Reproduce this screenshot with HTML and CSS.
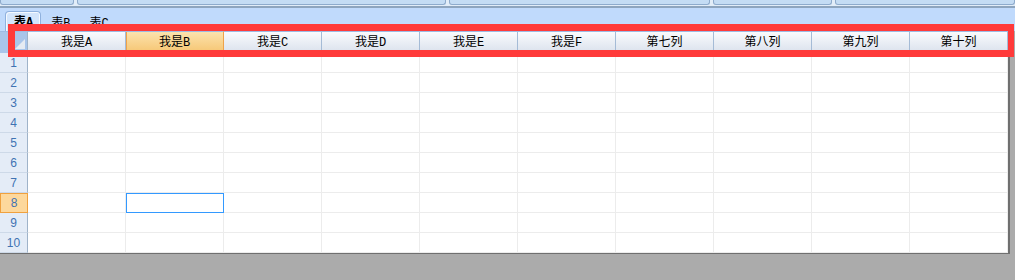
FILE: index.html
```html
<!DOCTYPE html>
<html lang="en">
<head>
  <meta charset="UTF-8">
  <title>Sheet</title>
  <link rel="stylesheet" href="styles.css">
</head>
<body>

<div class="toolbar">
  <div class="tool w1"><span>DOWNLOAD</span></div>
  <div class="tool w2"><span>SEARCH</span></div>
  <div class="tool w3"><span>新增一级目录</span></div>
  <div class="tool w4"><span>删除列</span></div>
  <div class="tool w5"><span>新建工作表</span></div>
</div>

<div class="tabs">
  <div class="tab active">表A</div>
  <div class="tab">表B</div>
  <div class="tab">表C</div>
</div>

<div class="sheet" id="sheet"></div>

<div class="mark"></div>

<script>
  const columns = ["我是A", "我是B", "我是C", "我是D", "我是E", "我是F", "第七列", "第八列", "第九列", "第十列"];
  const rowCount = 10;
  const activeCol = 1;
  const activeRow = 8;

  const sheet = document.getElementById("sheet");

  function cell(cls, text) {
    const div = document.createElement("div");
    div.className = cls;
    if (text) div.textContent = text;
    sheet.appendChild(div);
    return div;
  }

  const corner = cell("corner");
  corner.appendChild(document.createElement("span"));

  columns.forEach((name, i) => {
    cell(i === activeCol ? "head current" : "head", name);
  });

  for (let r = 1; r <= rowCount; r++) {
    cell(r === activeRow ? "num current" : "num", String(r));
    columns.forEach((name, i) => {
      const selected = r === activeRow && i === activeCol;
      cell(selected ? "cell selected" : "cell");
    });
  }
</script>

</body>
</html>
```

FILE: styles.css
```css
body {
  margin: 0;
  background-color: #ababab;
  font-family: "Liberation Mono", "Noto Sans CJK SC", monospace;
  font-size: 12px;
  color: #000;
  position: relative;
}
.toolbar {
  display: flex;
  gap: 3px;
  height: 6px;
  background-color: #e2edf8;
  border-bottom: 2px solid #8ea5be;
}
.tool {
  box-sizing: border-box;
  height: 5px;
  border: 1px solid #8eabcc;
  border-top: none;
  border-radius: 0 0 3px 3px;
  background-color: #c4dcf4;
  overflow: hidden;
  text-align: center;
}
.tool span {
  display: block;
  margin-top: -10px;
  line-height: 12px;
  color: #3b6db5;
}
.w1 { width: 74px; }
.w2 { width: 369px; }
.w3 { width: 262px; }
.w4 { width: 119px; }
.w5 { width: 180px; }

.tabs {
  display: flex;
  align-items: flex-end;
  height: 23px;
  padding-left: 5px;
  background-color: #c0dafc;
}
.tab {
  box-sizing: border-box;
  height: 17px;
  padding: 3px 9px 0 10px;
  line-height: 14px;
}
.tab.active {
  height: 20px;
  padding: 4px 7px 0 8px;
  font-weight: bold;
  background-color: #d3e5fb;
  border: 1px solid #8fb1de;
  border-bottom: none;
  border-radius: 4px 4px 0 0;
  box-shadow: inset 1px 1px 0 #f4f9ff, inset -1px 0 0 #f4f9ff;
}

.sheet {
  display: grid;
  grid-template-columns: 28px repeat(10, 98px);
  grid-template-rows: 22px;
  grid-auto-rows: 20px;
  width: 1008px;
  background-color: #fff;
  border-right: 2px solid #6f6f6f;
  border-bottom: 1px solid #6f6f6f;
}
.corner, .head {
  box-sizing: border-box;
  border-top: 1px solid #9dbbe4;
}
.corner {
  display: flex;
  justify-content: flex-end;
  align-items: flex-end;
  padding: 0 2px 4px 0;
  background-color: #a9c5ea;
  border-right: 1px solid #9fb3c9;
}
.corner span {
  width: 0;
  height: 0;
  border-left: 10px solid transparent;
  border-bottom: 10px solid #e6ebf2;
}
.head {
  display: flex;
  align-items: center;
  justify-content: center;
  padding-bottom: 2px;
  background: linear-gradient(#fafbfd, #dbe2ed);
  border-right: 1px solid #a5bbd6;
  border-bottom: 1px solid #a5bbd6;
}
.head.current {
  background: linear-gradient(#fce3ad, #f6c674);
  border-right-color: #eea24a;
  box-shadow: inset 1px 0 0 #eea24a;
}
.num {
  box-sizing: border-box;
  display: flex;
  align-items: center;
  justify-content: center;
  font-family: "Liberation Sans", sans-serif;
  color: #3f73b3;
  background-color: #e4ecf7;
  border-right: 1px solid #9fb3c9;
  border-bottom: 1px solid #cdd9e8;
}
.num.current {
  background-color: #fdd89c;
  border: 1px solid #f0a13e;
}
.cell {
  box-sizing: border-box;
  border-right: 1px solid #ececec;
  border-bottom: 1px solid #ececec;
}
.cell.selected {
  outline: 1px solid #3399ff;
  outline-offset: -1px;
}

.mark {
  position: absolute;
  left: 8px;
  top: 24px;
  box-sizing: border-box;
  width: 1006px;
  height: 33px;
  border: 7px solid #ff3a3a;
  border-right-width: 6px;
}
```
